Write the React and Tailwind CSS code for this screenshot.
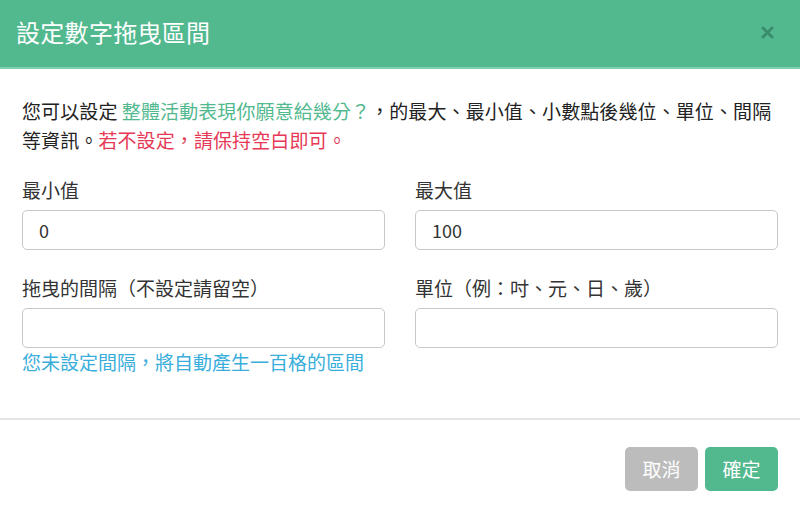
const Field = ({ label, value }) => (
  <div className="flex flex-col">
    <label className="text-[19px] leading-[27px] text-[#333] mb-[7px]">{label}</label>
    <input
      defaultValue={value}
      className="h-[40px] w-full rounded-[5px] border border-[#c8c8c8] bg-white px-[16px] text-[18px] text-[#333] outline-none"
    />
  </div>
);

export default function App() {
  return (
    <div
      className="w-[800px] h-[512px] bg-white flex flex-col overflow-hidden"
      style={{ fontFamily: '"Noto Sans CJK TC", "Noto Sans", sans-serif' }}
    >
      {/* Header */}
      <div className="h-[69px] bg-[#52b98f] border-b-2 border-[#7fd0b0] flex items-center justify-between pl-[16px] pr-[26px] pb-[4px] shrink-0">
        <h1 className="text-[24px] text-white font-normal tracking-[0.3px]">設定數字拖曳區間</h1>
        <svg width="13" height="13" viewBox="0 0 13 13" className="mt-[1px]">
          <path d="M2 2L11 11M11 2L2 11" stroke="#3a8d6b" strokeWidth="3" strokeLinecap="round" />
        </svg>
      </div>

      {/* Body */}
      <div className="px-[22px] pt-[27px] pb-[22px]">
        <p className="text-[19px] leading-[29px] text-[#222] tracking-[0.1px]">
          您可以設定 <span className="text-[#52b98f]">整體活動表現你願意給幾分？</span>，的最大、最小值、小數點後幾位、單位、間隔等資訊。
          <span className="text-[#e53955]">若不設定，請保持空白即可。</span>
        </p>

        <div className="grid grid-cols-2 gap-x-[30px] mt-[22px]">
          <Field label="最小值" value="0" />
          <Field label="最大值" value="100" />
        </div>

        <div className="grid grid-cols-2 gap-x-[30px] mt-[24px]">
          <div>
            <Field label="拖曳的間隔（不設定請留空）" value="" />
            <p className="text-[19px] leading-[26px] text-[#3aaedb] mt-[1px]">您未設定間隔，將自動產生一百格的區間</p>
          </div>
          <Field label="單位（例：吋、元、日、歲）" value="" />
        </div>
      </div>

      <div className="mt-auto border-t-2 border-[#e4e4e4] flex justify-end gap-[7px] px-[22px] pt-[27px] pb-[21px]">
        <button className="h-[44px] w-[73px] rounded-[5px] bg-[#bcbcbc] text-white text-[19px]">取消</button>
        <button className="h-[44px] w-[73px] rounded-[5px] bg-[#52b98f] text-white text-[19px]">確定</button>
      </div>
    </div>
  );
}
